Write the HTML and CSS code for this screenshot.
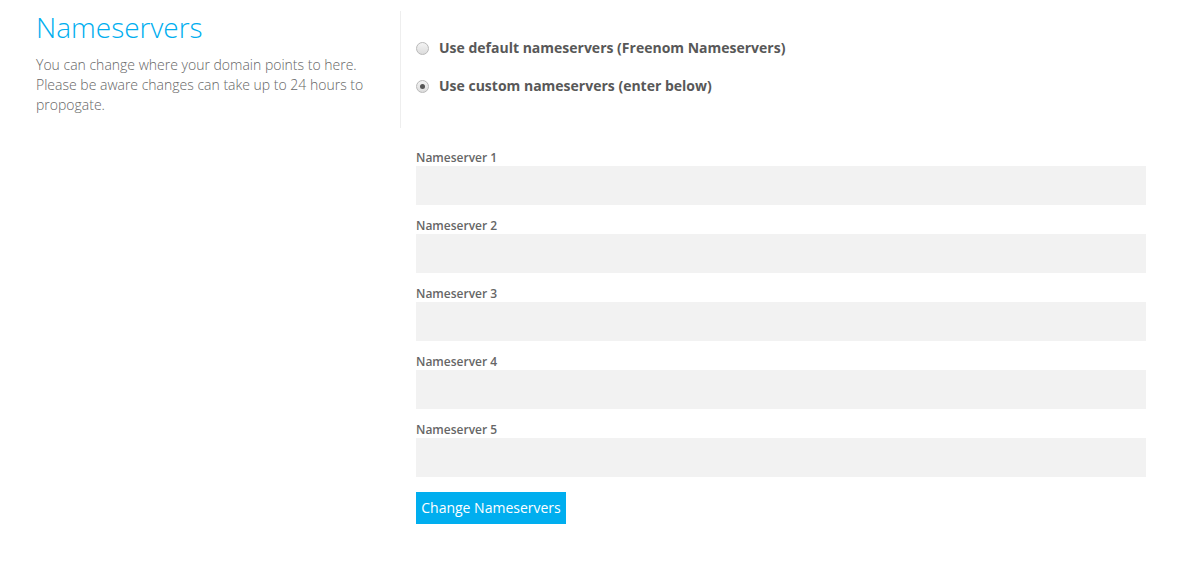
FILE: index.html
```html
<!DOCTYPE html>
<html>
<head>
<meta charset="utf-8">
<link rel="stylesheet" href="styles.css">
</head>
<body>
<div class="page">
  <div class="top">
    <div class="intro">
      <h1 class="title">Nameservers</h1>
      <p class="desc">You can change where your domain points to here. Please be aware changes can take up to 24 hours to propogate.</p>
    </div>
    <div class="choices">
      <label class="choice"><span class="radio"></span><span class="choice-text">Use default nameservers (Freenom Nameservers)</span></label>
      <label class="choice"><span class="radio checked"></span><span class="choice-text">Use custom nameservers (enter below)</span></label>
    </div>
  </div>
  <form class="fields">
    <div class="field"><label class="field-label">Nameserver 1</label><div class="input"></div></div>
    <div class="field"><label class="field-label">Nameserver 2</label><div class="input"></div></div>
    <div class="field"><label class="field-label">Nameserver 3</label><div class="input"></div></div>
    <div class="field"><label class="field-label">Nameserver 4</label><div class="input"></div></div>
    <div class="field"><label class="field-label">Nameserver 5</label><div class="input"></div></div>
    <div class="actions"><span class="btn">Change Nameservers</span></div>
  </form>
</div>
</body>
</html>
```
FILE: styles.css
```css
html, body {
  margin: 0;
  padding: 0;
  background: #fff;
}
body {
  font-family: "Open Sans", "Liberation Sans", sans-serif;
  color: #666;
}
.page {
  padding-top: 11px;
}
.top {
  display: flex;
}
.intro {
  flex: none;
  width: 400px;
  box-sizing: border-box;
  padding-left: 36px;
  padding-right: 34px;
}
.title {
  margin: 0;
  font-size: 28px;
  font-weight: 300;
  line-height: 32px;
  color: #00aeef;
}
.desc {
  margin: 12px 0 0;
  font-size: 14px;
  font-weight: 300;
  line-height: 20px;
  color: #666;
}
.choices {
  border-left: 1px solid #eee;
  padding: 26px 0 33px 15px;
  display: flex;
  flex-direction: column;
  gap: 18px;
}
.choice {
  display: flex;
  align-items: center;
  height: 20px;
}
.radio {
  width: 11px;
  height: 11px;
  border-radius: 50%;
  border: 1px solid #b9b9b9;
  background: linear-gradient(#f4f4f4, #dcdcdc);
  margin-right: 10px;
  margin-top: 3px;
  display: flex;
  align-items: center;
  justify-content: center;
  flex: none;
}
.radio.checked::after {
  content: "";
  width: 5px;
  height: 5px;
  border-radius: 50%;
  background: #555;
}
.choice-text {
  font-size: 14px;
  font-weight: 700;
  color: #585858;
}
.fields {
  margin: 22px 0 0 416px;
  width: 730px;
}
.field {
  margin-bottom: 13px;
}
.field-label {
  display: block;
  font-size: 12px;
  font-weight: 600;
  line-height: 16px;
  color: #666;
}
.input {
  height: 39px;
  background: #f2f2f2;
}
.actions {
  padding-top: 2px;
}
.btn {
  display: inline-block;
  width: 150px;
  height: 32px;
  line-height: 32px;
  text-align: center;
  background: #00aeef;
  color: #fff;
  font-size: 14px;
  font-weight: 400;
}
```
